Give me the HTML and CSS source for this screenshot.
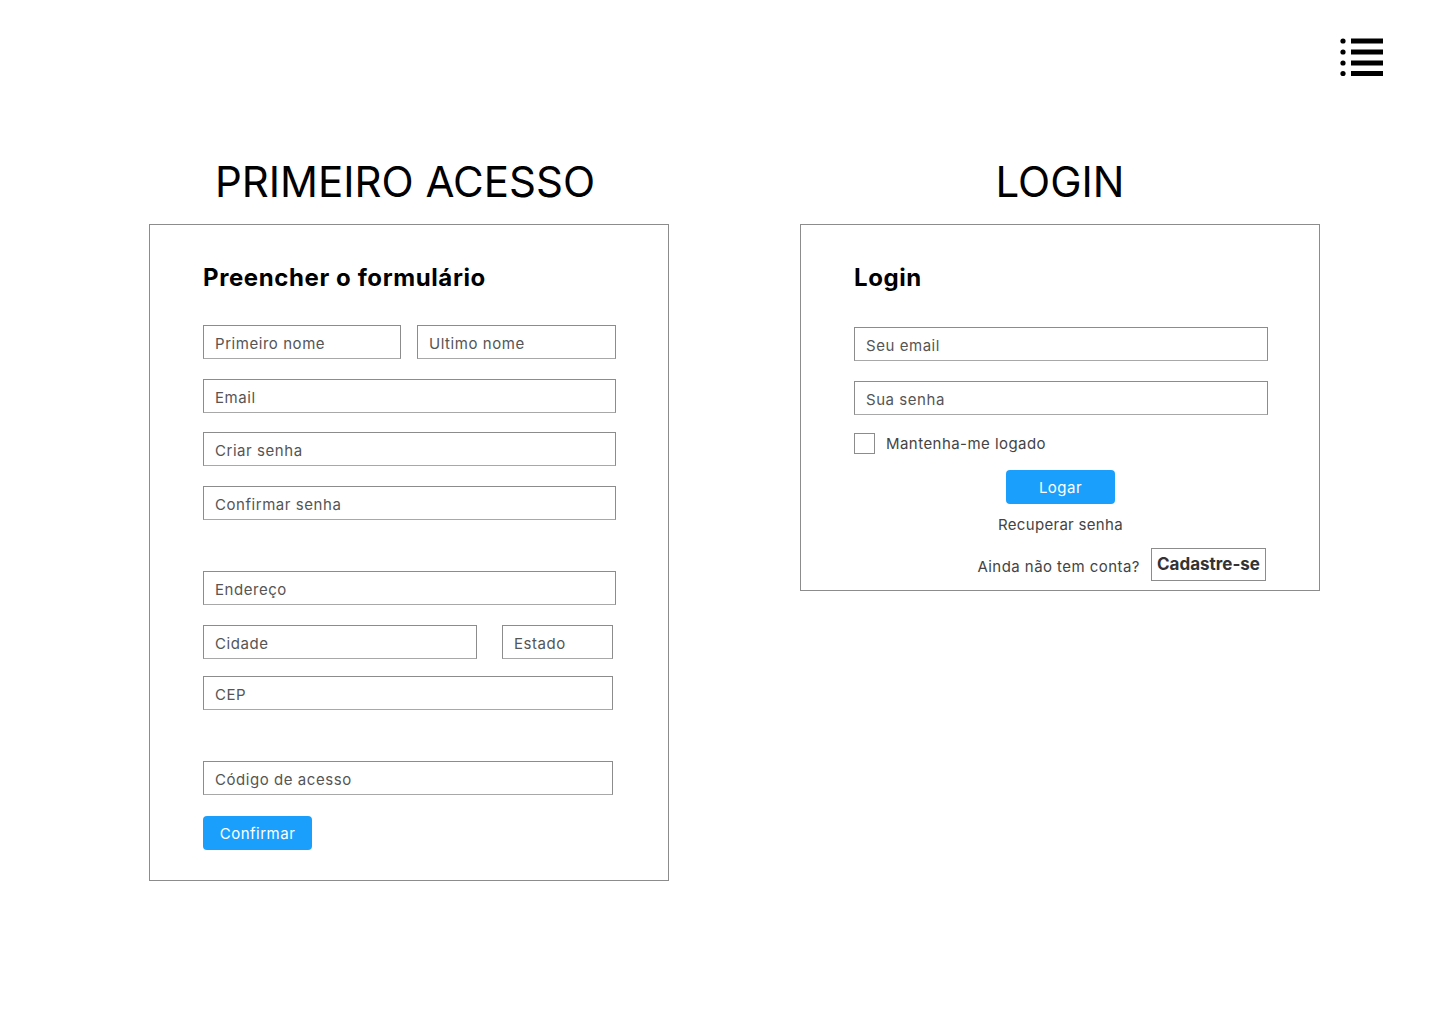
FILE: index.html
```html
<!DOCTYPE html>
<html lang="pt-BR">
<head>
<meta charset="utf-8">
<title>Primeiro acesso / Login</title>
<link rel="stylesheet" href="styles.css">
</head>
<body>
<div class="page">
  <header class="topbar">
    <button class="menu" aria-label="Menu">
      <svg width="44" height="40" viewBox="0 0 44 40">
        <circle cx="3" cy="3" r="2.6"/><rect x="11" y="0.5" width="32" height="5"/>
        <circle cx="3" cy="14" r="2.6"/><rect x="11" y="11.5" width="32" height="5"/>
        <circle cx="3" cy="25" r="2.6"/><rect x="11" y="22.5" width="32" height="5"/>
        <circle cx="3" cy="35.5" r="2.6"/><rect x="11" y="33" width="32" height="5"/>
      </svg>
    </button>
  </header>
  <main class="columns">
    <section class="col">
      <h1 class="title title-left">PRIMEIRO ACESSO</h1>
      <div class="card card-left">
        <h2 class="card-title">Preencher o formulário</h2>
        <div class="row r1">
          <div class="input w197">Primeiro nome</div>
          <div class="input w198">Ultimo nome</div>
        </div>
        <div class="input full m-20">Email</div>
        <div class="input full m-19">Criar senha</div>
        <div class="input full m-20">Confirmar senha</div>
        <div class="input full m-51">Endereço</div>
        <div class="row r2 m-20">
          <div class="input w273">Cidade</div>
          <div class="input w110">Estado</div>
        </div>
        <div class="input w410 m-17">CEP</div>
        <div class="input w410 m-51">Código de acesso</div>
        <button class="btn btn-confirm">Confirmar</button>
      </div>
    </section>
    <section class="col">
      <h1 class="title">LOGIN</h1>
      <div class="card card-right">
        <h2 class="card-title">Login</h2>
        <div class="input full2 m-login">Seu email</div>
        <div class="input full2 m-20">Sua senha</div>
        <label class="check"><span class="box"></span><span>Mantenha-me logado</span></label>
        <button class="btn btn-login">Logar</button>
        <a class="recover">Recuperar senha</a>
        <div class="signup">
          <span class="ask">Ainda não tem conta?</span>
          <a class="signup-btn">Cadastre-se</a>
        </div>
      </div>
    </section>
  </main>
</div>
</body>
</html>
```
FILE: styles.css
```css
* { box-sizing: border-box; }
html, body { margin: 0; padding: 0; background: #fff; }
body {
  font-family: "Inter", "Open Sans", "Liberation Sans", sans-serif;
  color: #111;
  width: 1440px;
  height: 1024px;
  overflow: hidden;
}
.page { width: 1440px; }
.topbar {
  display: flex;
  justify-content: flex-end;
  padding: 38px 56px 0 0;
  height: 150px;
}
.menu {
  border: 0; background: none; padding: 0; margin: 0;
  width: 44px; height: 40px; cursor: pointer;
}
.menu svg { display: block; fill: #000; }
.columns {
  display: flex;
  gap: 131px;
  padding-left: 149px;
}
.col { width: 520px; }
.title {
  margin: 0;
  height: 74px;
  text-align: center;
  font-weight: 400;
  font-size: 42px;
  line-height: 63px;
  letter-spacing: 0;
  color: #000;
}
.title-left { padding-right: 8px; }
.card {
  border: 1px solid #8c8c8c;
  padding: 38px 0 0 53px;
  display: flex;
  flex-direction: column;
  align-items: flex-start;
}
.card-left { height: 657px; }
.card-right { height: 367px; padding-left: 53px; }
.card-title {
  margin: 0;
  font-size: 24px;
  font-weight: 700;
  line-height: 30px;
  color: #000;
  letter-spacing: 0.6px;
}
.row { display: flex; }
.r1 { margin-top: 32px; gap: 16px; }
.r2 { gap: 25px; }
.input {
  height: 34px;
  border: 1px solid #8c8c8c;
  border-bottom-color: #a8a8a8;
  padding: 0 11px;
  font-size: 15px;
  letter-spacing: 0.55px;
  line-height: 32px;
  padding-top: 2px;
  color: #555;
  white-space: nowrap;
}
.w197 { width: 198px; }
.w198 { width: 199px; }
.full { width: 413px; }
.full2 { width: 414px; }
.w273 { width: 274px; }
.w110 { width: 111px; }
.w410 { width: 410px; }
.m-19 { margin-top: 19px; }
.m-20 { margin-top: 20px; }
.m-17 { margin-top: 17px; }
.m-51 { margin-top: 51px; }
.m-login { margin-top: 34px; }
.btn {
  border: 0;
  background: #1b9ffc;
  color: #fff;
  font-family: inherit;
  font-size: 15px;
  letter-spacing: 0.5px;
  border-radius: 4px;
  height: 34px;
  padding: 0;
  cursor: pointer;
}
.btn-confirm { width: 109px; margin-top: 21px; }
.check {
  display: flex;
  align-items: center;
  gap: 11px;
  margin-top: 18px;
  font-size: 15px;
  letter-spacing: 0.45px;
  color: #444;
}
.box {
  width: 21px; height: 21px;
  border: 1px solid #8c8c8c;
}
.btn-login { width: 109px; margin-top: 16px; align-self: center; margin-left: -52px; }
.recover {
  align-self: center;
  margin-left: -52px;
  margin-top: 10px;
  font-size: 15px;
  letter-spacing: 0.3px;
  color: #444;
  line-height: 22px;
}
.signup {
  align-self: flex-end;
  margin-right: 53px;
  margin-top: 12px;
  display: flex;
  align-items: center;
  gap: 11px;
}
.ask { font-size: 15px; letter-spacing: 0.45px; color: #444; padding-top: 3px; }
.signup-btn {
  display: block;
  width: 115px;
  height: 33px;
  border: 1px solid #8c8c8c;
  font-size: 17px;
  font-weight: 700;
  color: #333;
  text-align: center;
  line-height: 31px;
}
```
